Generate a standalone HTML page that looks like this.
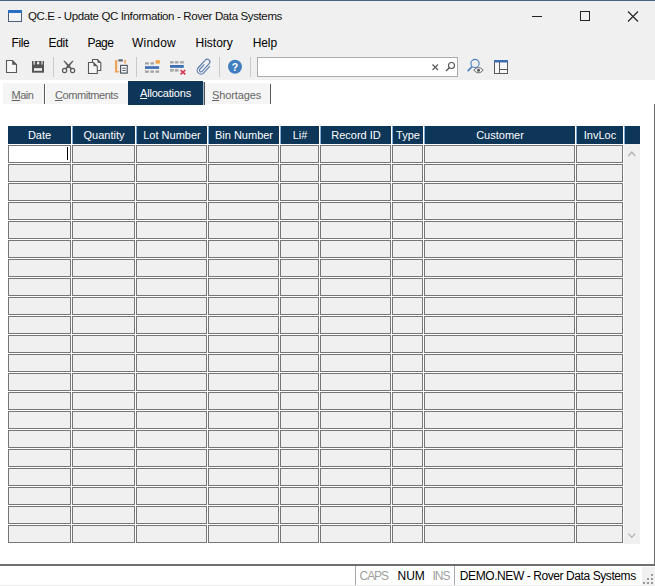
<!DOCTYPE html>
<html><head><meta charset="utf-8"><title>QC.E - Update QC Information - Rover Data Systems</title>
<style>
html,body{margin:0;padding:0;}
body{width:655px;height:586px;overflow:hidden;background:#fff;position:relative;font-family:"Liberation Sans",sans-serif;font-size:12px;color:#000;}
.abs{position:absolute;}
.t{position:absolute;white-space:nowrap;line-height:14px;font-size:12px;}
#chrome{left:0;top:0;width:655px;height:80px;background:#f0f0f0;}
#topline{left:0;top:0;width:655px;height:1px;background:#4f6587;}
.sep{position:absolute;width:1px;background:#c9c9c9;top:57px;height:20px;}
.hd{position:absolute;top:126px;height:18px;background:#0d3659;color:#fff;box-sizing:border-box;border-left:1px solid #7eaad8;}
.hd span{position:absolute;left:0;right:0;top:2px;text-align:center;line-height:14px;font-size:11px;white-space:nowrap;}
.c{position:absolute;height:18px;box-sizing:border-box;border:1px solid #767676;background:#f0f0f0;}
.tab{position:absolute;top:83px;height:21px;background:#f5f5f5;}
.tsep{position:absolute;top:84px;height:20px;width:1px;background:#5a5a5a;}
u{text-decoration:underline;text-underline-offset:1px;text-decoration-thickness:1px;}
</style></head><body>
<div id="chrome" class="abs"></div>
<div id="topline" class="abs"></div>

<svg class="abs" style="left:8px;top:10px" width="15" height="13" viewBox="0 0 15 13"><rect x="0.5" y="0.5" width="13" height="11" fill="#f4f4f4" stroke="#4a5d7a"/><rect x="0" y="0" width="14" height="3" fill="#2b6fc4"/></svg>
<svg class="abs" style="left:525px;top:5px" width="125" height="24" viewBox="525 5 125 24">
<path d="M532 16.5H542" stroke="#222" stroke-width="1"/>
<rect x="580.5" y="11.5" width="9" height="9" fill="none" stroke="#222" stroke-width="1"/>
<path d="M628 11.5L638 21.5M638 11.5L628 21.5" stroke="#222" stroke-width="1.1"/>
</svg>
<div class="sep" style="left:53px"></div>
<div class="sep" style="left:136px"></div>
<div class="sep" style="left:219px"></div>
<div class="sep" style="left:250px"></div>
<svg class="abs" style="left:0;top:54px" width="655" height="26" viewBox="0 54 655 26" fill="none">
<!-- new -->
<path d="M6.500 60.500H12.500L16.500 64.500V72.500H6.500Z" stroke="#585858" stroke-width="1.100" fill="#f7f7f7"/><path d="M12.500 60.500V64.500H16.500Z" fill="#585858" stroke="#585858" stroke-width="0.600"/>
<!-- save -->
<rect x="32" y="61" width="12" height="11.700" fill="#555"/><rect x="33.500" y="61" width="1.300" height="3.600" fill="#e4e4e4"/><rect x="41.400" y="61" width="1.200" height="3.600" fill="#e4e4e4"/><rect x="37" y="61.700" width="2.300" height="2.600" fill="#e8e8e8"/><rect x="34" y="68.100" width="8" height="2.700" fill="#efefef"/>
<!-- cut -->
<path d="M63.300 60.800L64.700 60.800L70.400 66.500L72 68.600L71 69.300L68.300 67.200Z" fill="#585858"/><path d="M73.700 60.800L72.300 60.800L66.600 66.500L65 68.600L66 69.300L68.700 67.200Z" fill="#585858"/><circle cx="64.600" cy="70.500" r="2.100" stroke="#585858" stroke-width="1.200"/><circle cx="72.600" cy="70.500" r="2.100" stroke="#585858" stroke-width="1.200"/>
<!-- copy -->
<path d="M92.500 59.500H97.500L100.800 62.800V70.500H92.500Z" stroke="#585858" stroke-width="1.100" fill="#f6f6f6"/><path d="M97.500 59.500V62.800H100.800Z" fill="#585858"/>
<path d="M88.500 62.500H93.500L97.300 66.300V73.500H88.500Z" stroke="#585858" stroke-width="1.100" fill="#f6f6f6"/><path d="M93.500 62.500V66.300H97.300Z" fill="#585858"/>
<!-- paste -->
<path d="M116.100 60V72.300" stroke="#eba55c" stroke-width="2.300"/><path d="M115 71.700H119.200" stroke="#eba55c" stroke-width="1.400"/><path d="M125.100 60V63.600" stroke="#eba55c" stroke-width="1.600"/><rect x="118.300" y="59.300" width="4.600" height="2.200" fill="#5f6b78"/>
<rect x="120.600" y="65.400" width="6.600" height="7.700" stroke="#4d5661" stroke-width="1.200" fill="#fafafa"/><path d="M122.300 68.200H125.700M122.300 70.500H125.700" stroke="#4d5661" stroke-width="1.100"/>
<!-- insert row -->
<g fill="#a2a2a2"><rect x="145" y="62.300" width="3.900" height="2.200"/><rect x="150.400" y="62.300" width="3.600" height="2.200"/>
<rect x="145" y="70.500" width="3.900" height="2.300"/><rect x="150.400" y="70.500" width="3.600" height="2.300"/><rect x="155.500" y="70.500" width="3.600" height="2.300"/></g>
<rect x="145" y="66.200" width="14.100" height="2.700" fill="#3f6fb2"/><rect x="155.600" y="60.200" width="4.300" height="3.400" fill="#f2a445"/>
<!-- delete row -->
<g fill="#a2a2a2"><rect x="170" y="61.200" width="3.700" height="2.200"/><rect x="174.900" y="61.200" width="3.600" height="2.200"/><rect x="180.100" y="61.200" width="3.700" height="2.200"/>
<rect x="170" y="69.100" width="3.700" height="2.500"/><rect x="174.900" y="69.100" width="3.600" height="2.500"/></g>
<rect x="170" y="65" width="13.800" height="2.800" fill="#3f6fb2"/><path d="M180.600 70L185.300 74.300M185.300 70L180.600 74.300" stroke="#d8344c" stroke-width="1.600"/>
<!-- paperclip -->
<g transform="translate(201 70.300) rotate(-47.600) scale(0.920)" stroke="#5c7eac" stroke-width="1.250"><path d="M9.850 4.100H0A4.100 4.100 0 0 1 0 -4.100H11.300A2.900 2.900 0 0 1 11.300 1.700H0A1.700 1.700 0 0 1 0 -1.700H7.300"/></g>
<!-- help -->
<circle cx="235" cy="66.800" r="7" fill="#3f7fbf"/>
<!-- search box -->
<rect x="257.500" y="57.500" width="200" height="19" fill="#fff" stroke="#ababab"/>
<path d="M432.500 64.500L438 70M438 64.500L432.500 70" stroke="#555" stroke-width="1.100"/>
<circle cx="451.500" cy="65.500" r="3" stroke="#555" stroke-width="1.100"/><path d="M449.300 67.700L446 71" stroke="#555" stroke-width="1.300"/>
<!-- find/eye -->
<circle cx="475" cy="63.500" r="4.100" stroke="#5484c0" stroke-width="1.200"/><path d="M472 66.700L467.700 71.200" stroke="#5484c0" stroke-width="1.700"/>
<path d="M473.800 70.200Q478.500 64.800 483.200 70.200Q478.500 75.600 473.800 70.200Z" fill="#f4f4f4" stroke="#6a6a6a" stroke-width="1"/><circle cx="478.500" cy="70.200" r="1.500" fill="#555"/>
<!-- layout -->
<rect x="494.500" y="61.500" width="13" height="12" stroke="#5a5a5a" fill="#f8f8f8"/><rect x="494" y="60" width="14" height="2.500" fill="#3c6eb4"/><path d="M499.500 62V73.500M500 69.500H508" stroke="#5a5a5a"/>
</svg>
<div class="t" style="left:231.800px;top:60px;color:#fff;font-weight:bold;font-size:10.500px;">?</div>
<div class="tab" style="left:3px;width:41px"></div><div class="tsep" style="left:44px"></div>
<div class="tab" style="left:46px;width:82px"></div>
<div class="abs" style="left:128px;top:81px;width:75px;height:24px;background:#0d3659"></div><div class="tsep" style="left:203px;top:82px;height:23px;background:#a9bccf"></div><div class="tsep" style="left:204px;top:82px;height:23px;background:#505050"></div>
<div class="tab" style="left:205px;width:65px"></div><div class="tsep" style="left:270px"></div>
<div class="hd" style="left:8px;width:63px;border-left:0;"><span>Date</span></div>
<div class="hd" style="left:72px;width:63px;"><span>Quantity</span></div>
<div class="hd" style="left:136px;width:71px;"><span>Lot Number</span></div>
<div class="hd" style="left:208px;width:71px;"><span>Bin Number</span></div>
<div class="hd" style="left:280px;width:39px;"><span>Li#</span></div>
<div class="hd" style="left:320px;width:71px;"><span>Record ID</span></div>
<div class="hd" style="left:392px;width:31px;"><span>Type</span></div>
<div class="hd" style="left:424px;width:151px;"><span>Customer</span></div>
<div class="hd" style="left:576px;width:47px;"><span>InvLoc</span></div>
<div class="hd" style="left:624px;width:16px;"><span></span></div>
<div class="abs" style="left:624px;top:144px;width:16px;height:400px;background:#f0f0f0"></div>
<svg class="abs" style="left:624px;top:144px" width="16" height="400" viewBox="0 0 16 400" fill="none"><path d="M4.400 12L7.800 8.100L11.200 12" stroke="#b2b2b2" stroke-width="1.300"/><path d="M4.400 389.600L7.800 393.400L11.200 389.600" stroke="#b2b2b2" stroke-width="1.300"/></svg>
<div class="c" style="left:8px;top:145px;width:63px;background:#fff;"></div>
<div class="c" style="left:72px;top:145px;width:63px;"></div>
<div class="c" style="left:136px;top:145px;width:71px;"></div>
<div class="c" style="left:208px;top:145px;width:71px;"></div>
<div class="c" style="left:280px;top:145px;width:39px;"></div>
<div class="c" style="left:320px;top:145px;width:71px;"></div>
<div class="c" style="left:392px;top:145px;width:31px;"></div>
<div class="c" style="left:424px;top:145px;width:151px;"></div>
<div class="c" style="left:576px;top:145px;width:47px;"></div>
<div class="c" style="left:8px;top:164px;width:63px;"></div>
<div class="c" style="left:72px;top:164px;width:63px;"></div>
<div class="c" style="left:136px;top:164px;width:71px;"></div>
<div class="c" style="left:208px;top:164px;width:71px;"></div>
<div class="c" style="left:280px;top:164px;width:39px;"></div>
<div class="c" style="left:320px;top:164px;width:71px;"></div>
<div class="c" style="left:392px;top:164px;width:31px;"></div>
<div class="c" style="left:424px;top:164px;width:151px;"></div>
<div class="c" style="left:576px;top:164px;width:47px;"></div>
<div class="c" style="left:8px;top:183px;width:63px;"></div>
<div class="c" style="left:72px;top:183px;width:63px;"></div>
<div class="c" style="left:136px;top:183px;width:71px;"></div>
<div class="c" style="left:208px;top:183px;width:71px;"></div>
<div class="c" style="left:280px;top:183px;width:39px;"></div>
<div class="c" style="left:320px;top:183px;width:71px;"></div>
<div class="c" style="left:392px;top:183px;width:31px;"></div>
<div class="c" style="left:424px;top:183px;width:151px;"></div>
<div class="c" style="left:576px;top:183px;width:47px;"></div>
<div class="c" style="left:8px;top:202px;width:63px;"></div>
<div class="c" style="left:72px;top:202px;width:63px;"></div>
<div class="c" style="left:136px;top:202px;width:71px;"></div>
<div class="c" style="left:208px;top:202px;width:71px;"></div>
<div class="c" style="left:280px;top:202px;width:39px;"></div>
<div class="c" style="left:320px;top:202px;width:71px;"></div>
<div class="c" style="left:392px;top:202px;width:31px;"></div>
<div class="c" style="left:424px;top:202px;width:151px;"></div>
<div class="c" style="left:576px;top:202px;width:47px;"></div>
<div class="c" style="left:8px;top:221px;width:63px;"></div>
<div class="c" style="left:72px;top:221px;width:63px;"></div>
<div class="c" style="left:136px;top:221px;width:71px;"></div>
<div class="c" style="left:208px;top:221px;width:71px;"></div>
<div class="c" style="left:280px;top:221px;width:39px;"></div>
<div class="c" style="left:320px;top:221px;width:71px;"></div>
<div class="c" style="left:392px;top:221px;width:31px;"></div>
<div class="c" style="left:424px;top:221px;width:151px;"></div>
<div class="c" style="left:576px;top:221px;width:47px;"></div>
<div class="c" style="left:8px;top:240px;width:63px;"></div>
<div class="c" style="left:72px;top:240px;width:63px;"></div>
<div class="c" style="left:136px;top:240px;width:71px;"></div>
<div class="c" style="left:208px;top:240px;width:71px;"></div>
<div class="c" style="left:280px;top:240px;width:39px;"></div>
<div class="c" style="left:320px;top:240px;width:71px;"></div>
<div class="c" style="left:392px;top:240px;width:31px;"></div>
<div class="c" style="left:424px;top:240px;width:151px;"></div>
<div class="c" style="left:576px;top:240px;width:47px;"></div>
<div class="c" style="left:8px;top:259px;width:63px;"></div>
<div class="c" style="left:72px;top:259px;width:63px;"></div>
<div class="c" style="left:136px;top:259px;width:71px;"></div>
<div class="c" style="left:208px;top:259px;width:71px;"></div>
<div class="c" style="left:280px;top:259px;width:39px;"></div>
<div class="c" style="left:320px;top:259px;width:71px;"></div>
<div class="c" style="left:392px;top:259px;width:31px;"></div>
<div class="c" style="left:424px;top:259px;width:151px;"></div>
<div class="c" style="left:576px;top:259px;width:47px;"></div>
<div class="c" style="left:8px;top:278px;width:63px;"></div>
<div class="c" style="left:72px;top:278px;width:63px;"></div>
<div class="c" style="left:136px;top:278px;width:71px;"></div>
<div class="c" style="left:208px;top:278px;width:71px;"></div>
<div class="c" style="left:280px;top:278px;width:39px;"></div>
<div class="c" style="left:320px;top:278px;width:71px;"></div>
<div class="c" style="left:392px;top:278px;width:31px;"></div>
<div class="c" style="left:424px;top:278px;width:151px;"></div>
<div class="c" style="left:576px;top:278px;width:47px;"></div>
<div class="c" style="left:8px;top:297px;width:63px;"></div>
<div class="c" style="left:72px;top:297px;width:63px;"></div>
<div class="c" style="left:136px;top:297px;width:71px;"></div>
<div class="c" style="left:208px;top:297px;width:71px;"></div>
<div class="c" style="left:280px;top:297px;width:39px;"></div>
<div class="c" style="left:320px;top:297px;width:71px;"></div>
<div class="c" style="left:392px;top:297px;width:31px;"></div>
<div class="c" style="left:424px;top:297px;width:151px;"></div>
<div class="c" style="left:576px;top:297px;width:47px;"></div>
<div class="c" style="left:8px;top:316px;width:63px;"></div>
<div class="c" style="left:72px;top:316px;width:63px;"></div>
<div class="c" style="left:136px;top:316px;width:71px;"></div>
<div class="c" style="left:208px;top:316px;width:71px;"></div>
<div class="c" style="left:280px;top:316px;width:39px;"></div>
<div class="c" style="left:320px;top:316px;width:71px;"></div>
<div class="c" style="left:392px;top:316px;width:31px;"></div>
<div class="c" style="left:424px;top:316px;width:151px;"></div>
<div class="c" style="left:576px;top:316px;width:47px;"></div>
<div class="c" style="left:8px;top:335px;width:63px;"></div>
<div class="c" style="left:72px;top:335px;width:63px;"></div>
<div class="c" style="left:136px;top:335px;width:71px;"></div>
<div class="c" style="left:208px;top:335px;width:71px;"></div>
<div class="c" style="left:280px;top:335px;width:39px;"></div>
<div class="c" style="left:320px;top:335px;width:71px;"></div>
<div class="c" style="left:392px;top:335px;width:31px;"></div>
<div class="c" style="left:424px;top:335px;width:151px;"></div>
<div class="c" style="left:576px;top:335px;width:47px;"></div>
<div class="c" style="left:8px;top:354px;width:63px;"></div>
<div class="c" style="left:72px;top:354px;width:63px;"></div>
<div class="c" style="left:136px;top:354px;width:71px;"></div>
<div class="c" style="left:208px;top:354px;width:71px;"></div>
<div class="c" style="left:280px;top:354px;width:39px;"></div>
<div class="c" style="left:320px;top:354px;width:71px;"></div>
<div class="c" style="left:392px;top:354px;width:31px;"></div>
<div class="c" style="left:424px;top:354px;width:151px;"></div>
<div class="c" style="left:576px;top:354px;width:47px;"></div>
<div class="c" style="left:8px;top:373px;width:63px;"></div>
<div class="c" style="left:72px;top:373px;width:63px;"></div>
<div class="c" style="left:136px;top:373px;width:71px;"></div>
<div class="c" style="left:208px;top:373px;width:71px;"></div>
<div class="c" style="left:280px;top:373px;width:39px;"></div>
<div class="c" style="left:320px;top:373px;width:71px;"></div>
<div class="c" style="left:392px;top:373px;width:31px;"></div>
<div class="c" style="left:424px;top:373px;width:151px;"></div>
<div class="c" style="left:576px;top:373px;width:47px;"></div>
<div class="c" style="left:8px;top:392px;width:63px;"></div>
<div class="c" style="left:72px;top:392px;width:63px;"></div>
<div class="c" style="left:136px;top:392px;width:71px;"></div>
<div class="c" style="left:208px;top:392px;width:71px;"></div>
<div class="c" style="left:280px;top:392px;width:39px;"></div>
<div class="c" style="left:320px;top:392px;width:71px;"></div>
<div class="c" style="left:392px;top:392px;width:31px;"></div>
<div class="c" style="left:424px;top:392px;width:151px;"></div>
<div class="c" style="left:576px;top:392px;width:47px;"></div>
<div class="c" style="left:8px;top:411px;width:63px;"></div>
<div class="c" style="left:72px;top:411px;width:63px;"></div>
<div class="c" style="left:136px;top:411px;width:71px;"></div>
<div class="c" style="left:208px;top:411px;width:71px;"></div>
<div class="c" style="left:280px;top:411px;width:39px;"></div>
<div class="c" style="left:320px;top:411px;width:71px;"></div>
<div class="c" style="left:392px;top:411px;width:31px;"></div>
<div class="c" style="left:424px;top:411px;width:151px;"></div>
<div class="c" style="left:576px;top:411px;width:47px;"></div>
<div class="c" style="left:8px;top:430px;width:63px;"></div>
<div class="c" style="left:72px;top:430px;width:63px;"></div>
<div class="c" style="left:136px;top:430px;width:71px;"></div>
<div class="c" style="left:208px;top:430px;width:71px;"></div>
<div class="c" style="left:280px;top:430px;width:39px;"></div>
<div class="c" style="left:320px;top:430px;width:71px;"></div>
<div class="c" style="left:392px;top:430px;width:31px;"></div>
<div class="c" style="left:424px;top:430px;width:151px;"></div>
<div class="c" style="left:576px;top:430px;width:47px;"></div>
<div class="c" style="left:8px;top:449px;width:63px;"></div>
<div class="c" style="left:72px;top:449px;width:63px;"></div>
<div class="c" style="left:136px;top:449px;width:71px;"></div>
<div class="c" style="left:208px;top:449px;width:71px;"></div>
<div class="c" style="left:280px;top:449px;width:39px;"></div>
<div class="c" style="left:320px;top:449px;width:71px;"></div>
<div class="c" style="left:392px;top:449px;width:31px;"></div>
<div class="c" style="left:424px;top:449px;width:151px;"></div>
<div class="c" style="left:576px;top:449px;width:47px;"></div>
<div class="c" style="left:8px;top:468px;width:63px;"></div>
<div class="c" style="left:72px;top:468px;width:63px;"></div>
<div class="c" style="left:136px;top:468px;width:71px;"></div>
<div class="c" style="left:208px;top:468px;width:71px;"></div>
<div class="c" style="left:280px;top:468px;width:39px;"></div>
<div class="c" style="left:320px;top:468px;width:71px;"></div>
<div class="c" style="left:392px;top:468px;width:31px;"></div>
<div class="c" style="left:424px;top:468px;width:151px;"></div>
<div class="c" style="left:576px;top:468px;width:47px;"></div>
<div class="c" style="left:8px;top:487px;width:63px;"></div>
<div class="c" style="left:72px;top:487px;width:63px;"></div>
<div class="c" style="left:136px;top:487px;width:71px;"></div>
<div class="c" style="left:208px;top:487px;width:71px;"></div>
<div class="c" style="left:280px;top:487px;width:39px;"></div>
<div class="c" style="left:320px;top:487px;width:71px;"></div>
<div class="c" style="left:392px;top:487px;width:31px;"></div>
<div class="c" style="left:424px;top:487px;width:151px;"></div>
<div class="c" style="left:576px;top:487px;width:47px;"></div>
<div class="c" style="left:8px;top:506px;width:63px;"></div>
<div class="c" style="left:72px;top:506px;width:63px;"></div>
<div class="c" style="left:136px;top:506px;width:71px;"></div>
<div class="c" style="left:208px;top:506px;width:71px;"></div>
<div class="c" style="left:280px;top:506px;width:39px;"></div>
<div class="c" style="left:320px;top:506px;width:71px;"></div>
<div class="c" style="left:392px;top:506px;width:31px;"></div>
<div class="c" style="left:424px;top:506px;width:151px;"></div>
<div class="c" style="left:576px;top:506px;width:47px;"></div>
<div class="c" style="left:8px;top:525px;width:63px;"></div>
<div class="c" style="left:72px;top:525px;width:63px;"></div>
<div class="c" style="left:136px;top:525px;width:71px;"></div>
<div class="c" style="left:208px;top:525px;width:71px;"></div>
<div class="c" style="left:280px;top:525px;width:39px;"></div>
<div class="c" style="left:320px;top:525px;width:71px;"></div>
<div class="c" style="left:392px;top:525px;width:31px;"></div>
<div class="c" style="left:424px;top:525px;width:151px;"></div>
<div class="c" style="left:576px;top:525px;width:47px;"></div>
<div class="abs" style="left:67px;top:147px;width:1px;height:13px;background:#000"></div>
<div class="abs" style="left:0;top:564px;width:655px;height:1px;background:#707070"></div><div class="abs" style="left:0;top:565px;width:655px;height:1px;background:#6c6c6c"></div>
<div class="abs" style="left:654px;top:104px;width:1px;height:462px;background:#6a6a6a"></div>
<div class="abs" style="left:0;top:585px;width:655px;height:1px;background:#ececec"></div>
<div class="abs" style="left:355px;top:566px;width:1px;height:19px;background:#a8a8a8"></div>
<div class="abs" style="left:454px;top:566px;width:1px;height:19px;background:#a8a8a8"></div>
<div class="abs" style="left:642px;top:567px;width:13px;height:19px;background:#f0f0f0"></div>
<svg class="abs" style="left:642px;top:569px" width="13" height="16" viewBox="0 0 13 16" fill="#9a9a9a"><rect x="9" y="5" width="2" height="2"/><rect x="9" y="9" width="2" height="2"/><rect x="5" y="9" width="2" height="2"/><rect x="9" y="13" width="2" height="2"/><rect x="5" y="13" width="2" height="2"/><rect x="1" y="13" width="2" height="2"/></svg>
<div class="t" id="title" style="left:28px;top:8.5px;color:#111;font-size:11.500px;letter-spacing:-0.373px;">QC.E - Update QC Information - Rover Data Systems</div>
<div class="t" id="m0" style="left:11.4px;top:36px;letter-spacing:-0.336px;">File</div>
<div class="t" id="m1" style="left:48.5px;top:36px;letter-spacing:-0.297px;">Edit</div>
<div class="t" id="m2" style="left:87.4px;top:36px;letter-spacing:-0.508px;">Page</div>
<div class="t" id="m3" style="left:132px;top:36px;letter-spacing:0.219px;">Window</div>
<div class="t" id="m4" style="left:195.5px;top:36px;letter-spacing:-0.006px;">History</div>
<div class="t" id="m5" style="left:252.7px;top:36px;letter-spacing:-0.097px;">Help</div>
<div class="t" id="tb0" style="left:11.6px;top:88px;color:#666;font-size:11px;letter-spacing:-0.565px;"><u>M</u>ain</div>
<div class="t" id="tb1" style="left:55px;top:88px;color:#666;font-size:11px;letter-spacing:-0.442px;"><u>C</u>ommitments</div>
<div class="t" id="tb2" style="left:140px;top:86px;color:#fff;font-size:11px;letter-spacing:-0.200px;"><u>A</u>llocations</div>
<div class="t" id="tb3" style="left:212px;top:88px;color:#666;font-size:11px;letter-spacing:-0.128px;"><u>S</u>hortages</div>
<div class="t" id="s0" style="left:359.6px;top:568.5px;color:#a0a0a0;letter-spacing:-1.072px;">CAPS</div>
<div class="t" id="s1" style="left:397.5px;top:568.5px;color:#000;letter-spacing:-0.009px;">NUM</div>
<div class="t" id="s2" style="left:432.4px;top:568.5px;color:#a0a0a0;letter-spacing:-0.972px;">INS</div>
<div class="t" id="s3" style="left:459.8px;top:568.5px;color:#000;letter-spacing:-0.415px;">DEMO.NEW - Rover Data Systems</div>
</body></html>
